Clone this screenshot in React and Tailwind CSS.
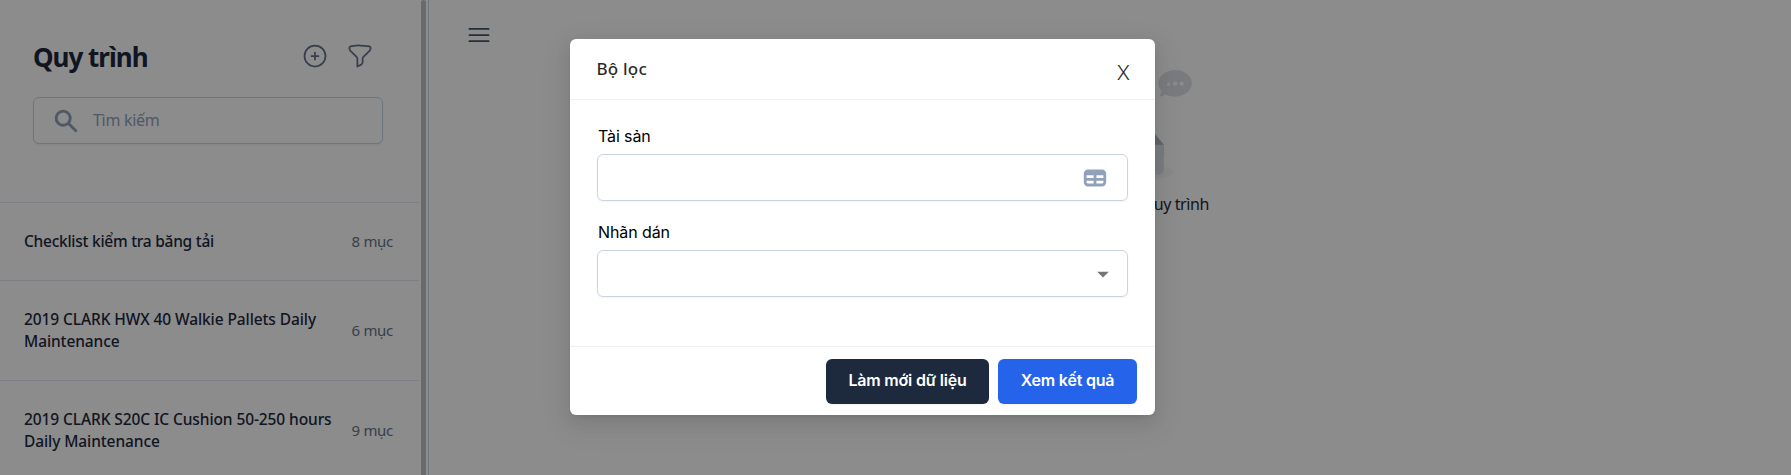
const items = [
  { name: 'Checklist kiểm tra băng tải', count: '8 mục', tracking: 'tracking-[-0.26px]' },
  { name: '2019 CLARK HWX 40 Walkie Pallets Daily Maintenance', count: '6 mục', tracking: 'tracking-[-0.1px]' },
  { name: '2019 CLARK S20C IC Cushion 50-250 hours Daily Maintenance', count: '9 mục', tracking: 'tracking-[-0.1px]' },
];

function Outline({ d }) {
  return (
    <svg className="size-7" viewBox="0 0 24 24" fill="none" stroke="currentColor" strokeWidth="1.5" strokeLinecap="round" strokeLinejoin="round">
      <path d={d} />
    </svg>
  );
}

function Solid({ d, className = '' }) {
  return (
    <svg className={`size-7 ${className}`} viewBox="0 0 20 20" fill="currentColor">
      <path fillRule="evenodd" clipRule="evenodd" d={d} />
    </svg>
  );
}

function EmptyArt() {
  return (
    <svg className="h-28 w-[136px]" viewBox="0 0 184 152" fill="none">
      <g transform="translate(24 31.67)">
        <ellipse cx="67.797" cy="106.89" rx="67.797" ry="12.668" fill="#F5F5F7" fillOpacity=".8" />
        <path d="M122.034 69.674L98.109 40.229c-1.148-1.386-2.826-2.225-4.593-2.225h-51.44c-1.766 0-3.444.839-4.592 2.225L13.56 69.674v15.383h108.475V69.674z" fill="#AEB8C2" />
        <path d="M33.83 0h67.933a4 4 0 0 1 4 4v93.344a4 4 0 0 1-4 4H33.83a4 4 0 0 1-4-4V4a4 4 0 0 1 4-4z" fill="#F5F5F7" />
        <path d="M121.813 105.032c-.775 3.071-3.497 5.36-6.735 5.36H20.515c-3.238 0-5.96-2.29-6.734-5.36a7.309 7.309 0 0 1-.222-1.79V69.675h26.318c2.907 0 5.25 2.448 5.25 5.42v.04c0 2.971 2.37 5.37 5.277 5.37h34.785c2.907 0 5.277-2.421 5.277-5.393V75.1c0-2.972 2.343-5.426 5.25-5.426h26.318v33.569c0 .617-.077 1.216-.221 1.789z" fill="#DCE0E6" />
      </g>
      <path d="M149.121 33.292l-6.83 2.65a1 1 0 0 1-1.317-1.23l1.937-6.207c-2.589-2.944-4.109-6.534-4.109-10.408C138.802 8.102 148.92 0 161.402 0 173.881 0 184 8.102 184 18.097c0 9.995-10.118 18.097-22.599 18.097-4.528 0-8.744-1.066-12.28-2.902z" fill="#DCE0E6" />
      <g transform="translate(149.65 15.383)" fill="#FFF">
        <ellipse cx="20.654" cy="3.167" rx="2.849" ry="2.815" />
        <path d="M5.698 5.63H0L2.898.704zM9.259.704h4.985V5.63H9.259z" />
      </g>
    </svg>
  );
}

function Sidebar() {
  return (
    <aside className="flex h-full w-[429px] shrink-0 border-r border-slate-300">
      <div className="w-[419px]">
        <div className="flex h-[202px] flex-col px-[33px] pt-9">
          <div className="flex h-[42px] items-center justify-between pr-3">
            <h1 className="text-[26px] font-bold tracking-[-1px] text-slate-800">Quy trình</h1>
            <div className="flex gap-[17px] pb-0.5 text-[#64748b]">
              <Outline d="M12 9v6m3-3H9m12 0a9 9 0 11-18 0 9 9 0 0118 0z" />
              <Outline d="M12 3c2.755 0 5.455.232 8.083.678.533.09.917.556.917 1.096v1.044a2.25 2.25 0 01-.659 1.591l-5.432 5.432a2.25 2.25 0 00-.659 1.591v2.927a2.25 2.25 0 01-1.244 2.013L9.75 21v-6.568a2.25 2.25 0 00-.659-1.591L3.659 7.409A2.25 2.25 0 013 5.818V4.774c0-.54.384-1.006.917-1.096A48.32 48.32 0 0112 3z" />
            </div>
          </div>
          <div className="mt-[19px] flex h-[47px] w-[350px] items-center gap-[13px] rounded-md border border-slate-300 pl-[18px] text-slate-400 shadow-xs">
            <Solid d="M8 4a4 4 0 100 8 4 4 0 000-8zM2 8a6 6 0 1110.89 3.476l4.817 4.817a1 1 0 01-1.414 1.414l-4.816-4.816A6 6 0 012 8z" />
            <span className="pb-0.5 text-base tracking-[-0.3px]">Tìm kiếm</span>
          </div>
        </div>
        {items.map((item) => (
          <div key={item.name} className="flex items-center justify-between border-t border-slate-200 pt-[27px] pb-7 pr-[26px] pl-6 leading-[22px]">
            <span className={`w-[316px] text-[15.5px] font-medium text-slate-800 ${item.tracking}`}>{item.name}</span>
            <span className="text-[15px] tracking-[-0.3px] whitespace-nowrap text-[#64748b]">{item.count}</span>
          </div>
        ))}
      </div>
      <div className="ml-0.5 w-[5px] rounded-t-full bg-[#c1c1c1]" />
    </aside>
  );
}

function FilterDialog() {
  return (
    <div className="absolute inset-0 flex items-start bg-black/45 pt-[39px] pl-[570px]">
      <section className="flex h-[376px] w-[585px] flex-col rounded-md bg-white shadow-[0_6px_16px_0_rgba(0,0,0,0.08),0_3px_6px_-4px_rgba(0,0,0,0.12),0_9px_28px_8px_rgba(0,0,0,0.05)]">
        <header className="flex h-[61px] items-center justify-between border-b border-[#f0f0f0] pr-[25px] pl-[26.5px]">
          <h2 className="text-[17px] font-medium tracking-[0.2px] text-black/85">Bộ lọc</h2>
          <span className="pt-[7px] font-[Inter,sans-serif] text-[20px] font-light text-black/85">X</span>
        </header>
        <div className="flex-1 px-[27px] pt-6 font-[Inter,sans-serif]">
          <div className="pl-px text-base leading-6 tracking-[-0.1px] text-black">Tài sản</div>
          <div className="mt-1.5 flex h-[47px] items-center justify-end rounded-md border border-slate-300 pr-[18px] shadow-xs">
            <Solid className="text-slate-400" d="M5 4a3 3 0 00-3 3v6a3 3 0 003 3h10a3 3 0 003-3V7a3 3 0 00-3-3H5zm-1 9v-1h5v2H5a1 1 0 01-1-1zm7 1h4a1 1 0 001-1v-1h-5v2zm0-4h5V8h-5v2zM9 8H4v2h5V8z" />
          </div>
          <div className="mt-[19px] pl-px text-base leading-6 tracking-[-0.1px] text-black">Nhãn dán</div>
          <div className="mt-1.5 flex h-[47px] items-center justify-end rounded-md border border-slate-300 pr-2.5 shadow-xs">
            <svg className="size-7 text-black/54" viewBox="0 0 24 24" fill="currentColor"><path d="M7 10l5 5 5-5z" /></svg>
          </div>
        </div>
        <footer className="flex h-[69px] items-start justify-end gap-[9px] border-t border-[#f0f0f0] pt-3 pr-[18px] font-[Inter,sans-serif] text-base font-semibold tracking-[-0.2px] text-white">
          <button className="h-[45px] w-[163px] rounded-md bg-slate-800 pb-[3px] shadow-xs">Làm mới dữ liệu</button>
          <button className="h-[45px] w-[139px] rounded-md bg-[#2563eb] pb-[3px] shadow-xs">Xem kết quả</button>
        </footer>
      </section>
    </div>
  );
}

export default function App() {
  return (
    <div className="relative flex h-[475px] overflow-hidden bg-white font-['Noto_Sans',sans-serif]">
      <Sidebar />
      <main className="flex flex-1 items-start">
        <div className="pt-[20.5px] pl-[35.5px] text-slate-600">
          <Outline d="M3.75 6.75h16.5M3.75 12h16.5m-16.5 5.25h16.5" />
        </div>
        <div className="ml-[423.5px] flex w-[293px] flex-col items-end pt-[70px]">
          <div className="pr-[17px]"><EmptyArt /></div>
          <p className="mt-2.5 text-base tracking-[-0.4px] whitespace-nowrap text-slate-800">Vui lòng chọn một quy trình</p>
        </div>
      </main>
      <FilterDialog />
    </div>
  );
}
